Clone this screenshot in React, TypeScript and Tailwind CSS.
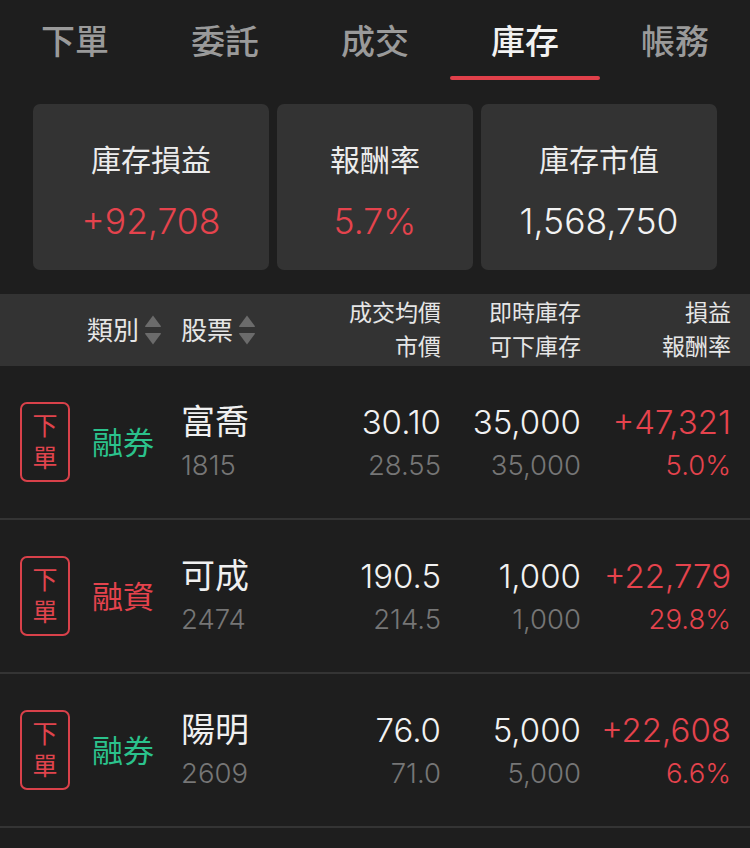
import React from "react";

const CJK = "font-['Inter','Noto_Sans_CJK_TC',sans-serif]";

const TABS = ["下單", "委託", "成交", "庫存", "帳務"];
const ACTIVE_TAB = 3;

type Holding = {
  kind: "融券" | "融資";
  name: string;
  code: string;
  avgPrice: string;
  marketPrice: string;
  qty: string;
  sellable: string;
  pnl: string;
  rate: string;
};

const HOLDINGS: Holding[] = [
  { kind: "融券", name: "富喬", code: "1815", avgPrice: "30.10", marketPrice: "28.55", qty: "35,000", sellable: "35,000", pnl: "+47,321", rate: "5.0%" },
  { kind: "融資", name: "可成", code: "2474", avgPrice: "190.5", marketPrice: "214.5", qty: "1,000", sellable: "1,000", pnl: "+22,779", rate: "29.8%" },
  { kind: "融券", name: "陽明", code: "2609", avgPrice: "76.0", marketPrice: "71.0", qty: "5,000", sellable: "5,000", pnl: "+22,608", rate: "6.6%" },
];

function SortArrows() {
  return (
    <svg width="18" height="32" viewBox="0 0 18 32" className="ml-[5px]">
      <path d="M9 1.5 L16.8 12 Q17.5 13 16.2 13 L1.8 13 Q0.5 13 1.2 12 Z" fill="#6b6b6b" />
      <path d="M9 30.5 L16.8 20 Q17.5 19 16.2 19 L1.8 19 Q0.5 19 1.2 20 Z" fill="#6b6b6b" />
    </svg>
  );
}

function SummaryCard({ label, value, tone, width }: { label: string; value: string; tone: "red" | "white"; width: string }) {
  return (
    <div className={`${width} h-[166px] rounded-[7px] bg-[#333333] flex flex-col items-center pt-[36px]`}>
      <span className="text-[30px] leading-[40px] text-[#ececec]">{label}</span>
      <span className={`mt-[22px] text-[35.5px] leading-[40px] font-light ${tone === "red" ? "text-[#e5434d]" : "text-[#f2f2f2]"}`}>
        {value}
      </span>
    </div>
  );
}

function HoldingRow({ h }: { h: Holding }) {
  return (
    <div className="flex items-center h-[154px] border-b-2 border-[#343434] pl-[20px] pr-[19px]">
      <div className="w-[50px] h-[80px] rounded-[7px] border-2 border-[#d9414a] flex flex-col items-center justify-center text-[#e0444d] text-[25px] leading-[32px]">
        <span>下</span>
        <span>單</span>
      </div>
      <div className={`ml-[22px] mt-[2px] w-[89px] text-[31px] ${h.kind === "融券" ? "text-[#2bc28c]" : "text-[#e5434d]"}`}>
        {h.kind}
      </div>
      <div className="w-[140px] flex flex-col mt-[4px]">
        <span className="text-[34px] leading-[42px] text-[#f0f0f0]">{h.name}</span>
        <span className="text-[27.5px] leading-[44px] font-light text-[#767676]">{h.code}</span>
      </div>
      <div className="w-[120px] flex flex-col items-end mt-[4px] font-light">
        <span className="text-[33px] leading-[42px] text-[#f2f2f2]">{h.avgPrice}</span>
        <span className="text-[27.5px] leading-[44px] text-[#767676]">{h.marketPrice}</span>
      </div>
      <div className="w-[140px] flex flex-col items-end mt-[4px] font-light">
        <span className="text-[33px] leading-[42px] text-[#f2f2f2]">{h.qty}</span>
        <span className="text-[27.5px] leading-[44px] text-[#767676]">{h.sellable}</span>
      </div>
      <div className="w-[150px] flex flex-col items-end mt-[4px] font-light">
        <span className="text-[33px] leading-[42px] text-[#e5434d]">{h.pnl}</span>
        <span className="text-[27.5px] leading-[44px] text-[#e5434d]">{h.rate}</span>
      </div>
    </div>
  );
}

export default function App() {
  return (
    <div className={`w-[750px] h-[848px] overflow-hidden bg-[#1e1e1e] ${CJK}`}>
      {/* tabs */}
      <div className="flex h-[80px]">
        {TABS.map((t, i) => (
          <div key={t} className="w-[150px] flex flex-col items-center">
            <span
              className={`mt-[20px] text-[34px] leading-[44px] font-medium ${
                i === ACTIVE_TAB ? "text-[#f2f2f2]" : "text-[#9a9a9a]"
              }`}
            >
              {t}
            </span>
            {i === ACTIVE_TAB && <div className="mt-auto h-[4px] w-[150px] rounded-full bg-[#e0404a]" />}
          </div>
        ))}
      </div>

      {/* summary */}
      <div className="flex gap-[8px] px-[33px] pt-[24px]">
        <SummaryCard label="庫存損益" value="+92,708" tone="red" width="w-[236px]" />
        <SummaryCard label="報酬率" value="5.7%" tone="red" width="w-[196px]" />
        <SummaryCard label="庫存市值" value="1,568,750" tone="white" width="w-[236px]" />
      </div>

      {/* column header */}
      <div className="mt-[24px] h-[72px] bg-[#333333] flex items-center pl-[87px] pr-[19px] text-[#e6e6e6] text-[23px]">
        <div className="w-[94px] flex items-center text-[26px]">
          <span>類別</span>
          <SortArrows />
        </div>
        <div className="w-[140px] flex items-center text-[26px]">
          <span>股票</span>
          <SortArrows />
        </div>
        <div className="w-[120px] flex flex-col items-end leading-[34px]">
          <span>成交均價</span>
          <span>市價</span>
        </div>
        <div className="w-[140px] flex flex-col items-end leading-[34px]">
          <span>即時庫存</span>
          <span>可下庫存</span>
        </div>
        <div className="w-[150px] flex flex-col items-end leading-[34px]">
          <span>損益</span>
          <span>報酬率</span>
        </div>
      </div>

      {HOLDINGS.map((h) => (
        <HoldingRow key={h.code} h={h} />
      ))}
    </div>
  );
}
